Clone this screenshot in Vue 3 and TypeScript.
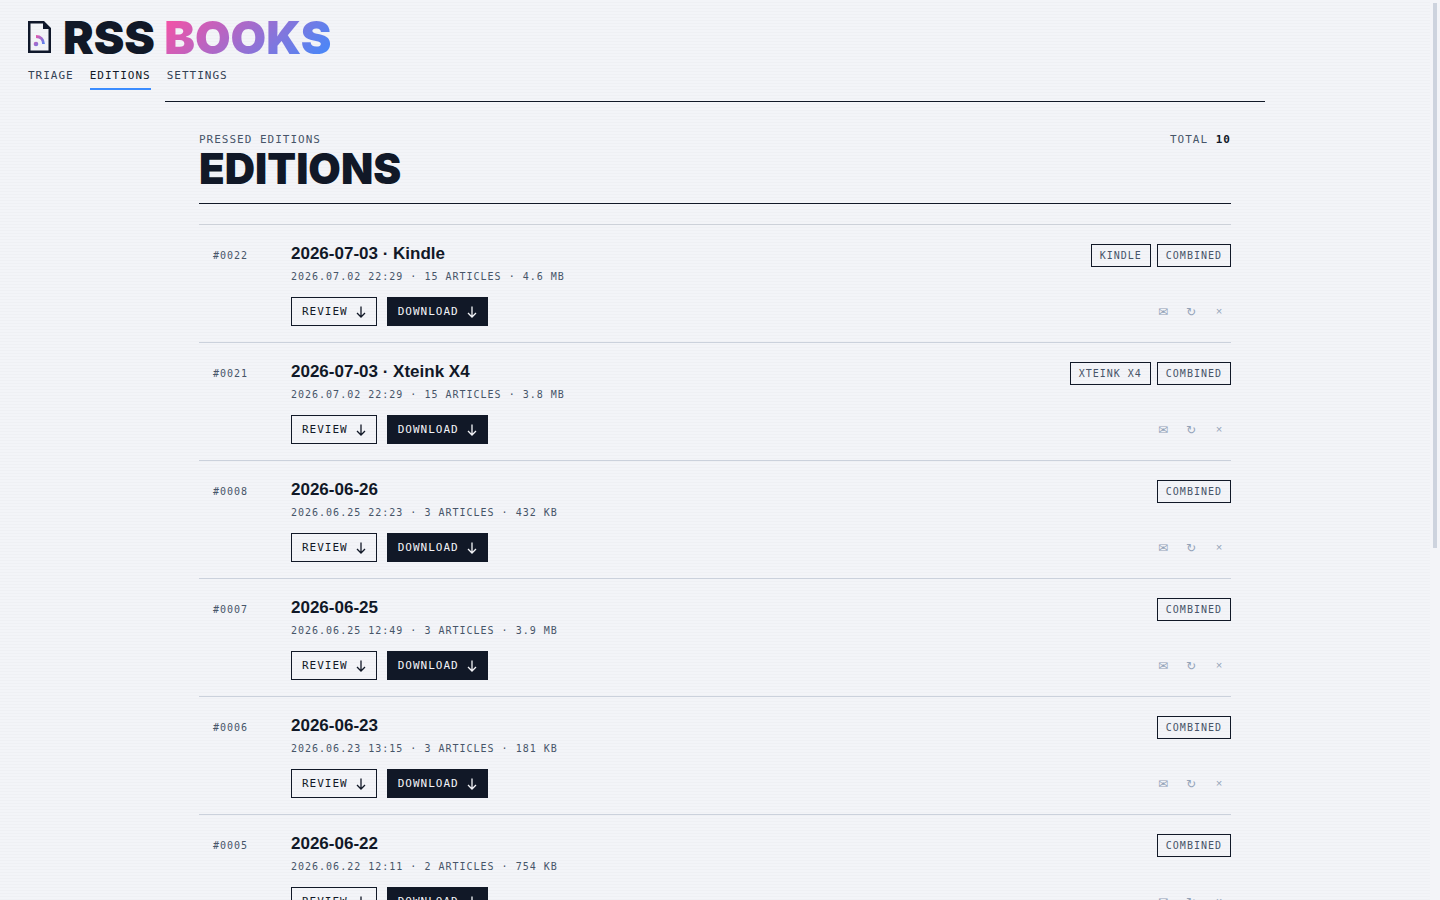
<script setup lang="ts">
interface Edition {
  id: string
  title: string
  meta: string
  tags: string[]
}

const navItems: { label: string; active: boolean }[] = [
  { label: 'Triage', active: false },
  { label: 'Editions', active: true },
  { label: 'Settings', active: false },
]

const total = 10

const editions: Edition[] = [
  { id: '0022', title: '2026-07-03 · Kindle', meta: '2026.07.02 22:29 · 15 articles · 4.6 MB', tags: ['Kindle', 'Combined'] },
  { id: '0021', title: '2026-07-03 · Xteink X4', meta: '2026.07.02 22:29 · 15 articles · 3.8 MB', tags: ['Xteink X4', 'Combined'] },
  { id: '0008', title: '2026-06-26', meta: '2026.06.25 22:23 · 3 articles · 432 KB', tags: ['Combined'] },
  { id: '0007', title: '2026-06-25', meta: '2026.06.25 12:49 · 3 articles · 3.9 MB', tags: ['Combined'] },
  { id: '0006', title: '2026-06-23', meta: '2026.06.23 13:15 · 3 articles · 181 KB', tags: ['Combined'] },
  { id: '0005', title: '2026-06-22', meta: '2026.06.22 12:11 · 2 articles · 754 KB', tags: ['Combined'] },
]
</script>

<template>
  <div class="page">
    <div class="scroll">
      <header class="masthead">
        <a class="brand" href="#">
          <svg class="logo" viewBox="0 0 23 32" aria-hidden="true">
            <defs>
              <linearGradient id="feed" x1="6" y1="14" x2="17" y2="25" gradientUnits="userSpaceOnUse">
                <stop offset="0" stop-color="#ff4fa0" />
                <stop offset="1" stop-color="#3b8cff" />
              </linearGradient>
            </defs>
            <path d="M0 0H16L23 7V32H0Z M2.5 2.5V29.5H20.5V8H15V2.5Z" fill="#0f172a" fill-rule="evenodd" />
            <circle cx="8" cy="23" r="2.3" fill="url(#feed)" />
            <path d="M8 15.500C12.500 15.500 15.500 18.500 15.500 23" fill="none" stroke="url(#feed)" stroke-width="2.800" />
          </svg>
          <span class="name">RSS <span class="accent">BOOKS</span></span>
        </a>
        <nav class="nav" aria-label="Main">
          <a v-for="item in navItems" :key="item.label" href="#" :class="{ active: item.active }">{{ item.label }}</a>
        </nav>
      </header>

      <main class="content">
        <div class="heading">
          <div>
            <p class="eyebrow">Pressed editions</p>
            <h1>EDITIONS</h1>
          </div>
          <p class="eyebrow">Total <strong>{{ total }}</strong></p>
        </div>

        <ul class="list">
          <li v-for="e in editions" :key="e.id" class="row">
            <span class="number">#{{ e.id }}</span>
            <div class="info">
              <h2>{{ e.title }}</h2>
              <p class="meta">{{ e.meta }}</p>
              <div class="actions">
                <button type="button" class="btn">
                  Review
                  <svg viewBox="0 0 10 12" aria-hidden="true"><path d="M5 0.500V11M1 7L5 11L9 7" /></svg>
                </button>
                <button type="button" class="btn solid">
                  Download
                  <svg viewBox="0 0 10 12" aria-hidden="true"><path d="M5 0.500V11M1 7L5 11L9 7" /></svg>
                </button>
              </div>
            </div>
            <div class="side">
              <div class="tags">
                <span v-for="tag in e.tags" :key="tag" class="tag">{{ tag }}</span>
              </div>
              <div class="tools">
                <button type="button" aria-label="Email edition">✉</button>
                <button type="button" aria-label="Rebuild edition">↻</button>
                <button type="button" class="remove" aria-label="Delete edition">×</button>
              </div>
            </div>
          </li>
        </ul>
      </main>
    </div>
    <div class="thumb" aria-hidden="true"></div>
  </div>
</template>

<style>
html,
body {
  margin: 0;
  background: #f3f4f8;
}
</style>

<style scoped>
.page {
  position: relative;
  height: 100vh;
  padding-right: 10px;
  overflow: hidden;
  box-sizing: border-box;
  color: #111827;
  font-family: "DejaVu Sans Mono", "Liberation Mono", monospace;
}

.scroll {
  height: 100%;
  overflow: hidden;
  background: repeating-linear-gradient(to bottom, transparent 0 2px, #eff0f4 2px 3px);
}

.thumb {
  position: absolute;
  top: 3px;
  right: 3px;
  width: 4px;
  height: calc(61vh - 4px);
  background: #cdd3de;
}

.masthead {
  padding: 13px 28px 0;
}

.brand {
  display: flex;
  align-items: center;
  gap: 12px;
  height: 48px;
  color: inherit;
  text-decoration: none;
}

.logo {
  width: 23px;
  height: 32px;
}

.name {
  font: 900 46px/48px Inter, "Liberation Sans", sans-serif;
}

.accent {
  background: linear-gradient(135deg, #ff4fa0, #3b8cff);
  background-clip: text;
  color: transparent;
}

.nav {
  display: flex;
  gap: 16px;
  margin-top: 7px;
}

.nav a {
  padding-bottom: 4px;
  border-bottom: 2px solid transparent;
  color: #334155;
  font-size: 11px;
  line-height: 16px;
  letter-spacing: 1px;
  text-decoration: none;
  text-transform: uppercase;
}

.nav a.active {
  border-color: #3b8cff;
  color: #111827;
}

.content {
  max-width: 1100px;
  margin: 11px auto 0;
  padding: 30px 34px 60px;
  box-sizing: border-box;
  border-top: 1px solid #111827;
}

.heading {
  display: flex;
  justify-content: space-between;
  align-items: flex-start;
  margin-bottom: 20px;
  padding-bottom: 13px;
  border-bottom: 1px solid #111827;
}

.eyebrow {
  margin: 0;
  color: #475569;
  font-size: 11px;
  line-height: 16px;
  letter-spacing: 1px;
  text-transform: uppercase;
}

.eyebrow strong {
  color: #111827;
}

h1 {
  margin: 0;
  font: 900 42px/42px Inter, "Liberation Sans", sans-serif;
}

.list {
  margin: 0;
  padding: 0;
  border-top: 1px solid #cdd1d9;
  list-style: none;
}

.row {
  display: grid;
  grid-template-columns: 64px 1fr auto;
  column-gap: 14px;
  padding: 18px 0 16px 14px;
  border-bottom: 1px solid #cbd1dc;
}

.number {
  padding-top: 5px;
  color: #475569;
  font-size: 10px;
  line-height: 16px;
  letter-spacing: 1px;
}

h2 {
  margin: 0;
  font: 700 17px/22px "Liberation Sans", Arial, sans-serif;
}

.meta {
  margin: 3px 0 12px;
  color: #475569;
  font-size: 10px;
  line-height: 17px;
  letter-spacing: 1px;
  text-transform: uppercase;
}

.actions {
  display: flex;
  gap: 10px;
}

.btn {
  display: flex;
  align-items: center;
  gap: 8px;
  height: 29px;
  padding: 0 10px;
  border: 1px solid #111827;
  background: transparent;
  color: #111827;
  font: 11px/16px "DejaVu Sans Mono", "Liberation Mono", monospace;
  letter-spacing: 1px;
  text-transform: uppercase;
}

.btn.solid {
  background: #111827;
  color: #f3f4f8;
}

.btn svg {
  width: 10px;
  height: 12px;
  fill: none;
  stroke: currentColor;
  stroke-width: 1.3;
}

.side {
  display: flex;
  flex-direction: column;
  justify-content: space-between;
  align-items: flex-end;
  padding-top: 1px;
}

.tags {
  display: flex;
  gap: 6px;
}

.tag {
  padding: 0 8px;
  border: 1px solid #111827;
  color: #475569;
  font-size: 10px;
  line-height: 21px;
  letter-spacing: 1px;
  text-transform: uppercase;
}

.tools {
  display: flex;
  gap: 4px;
  padding-bottom: 2px;
}

.tools button {
  width: 24px;
  height: 24px;
  padding: 0;
  border: 0;
  background: transparent;
  color: #94a3b8;
  font: 12px/24px "DejaVu Sans", sans-serif;
  text-align: center;
}

.tools .remove {
  font: 11px/24px "Liberation Mono", monospace;
}
</style>
